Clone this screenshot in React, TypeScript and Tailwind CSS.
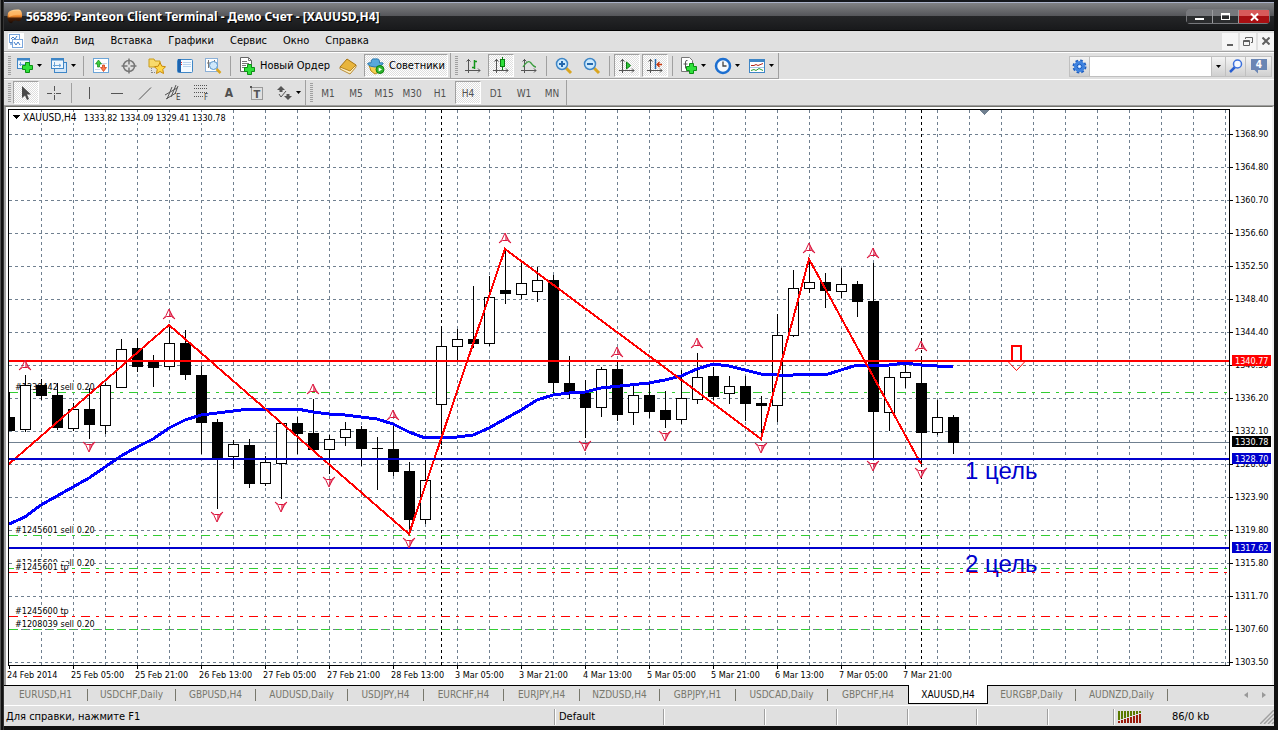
import type { ReactNode } from "react";
import clsx from "clsx";

type Candle = [number, number, number, number, boolean];

const FIRST_X = 9;
const BAR_STEP = 16;

// [high, body top, body bottom, low, is bearish] in chart pixels
const candles: Candle[] = [
    [392, 417, 430, 430, true],
    [375, 385, 429, 431, false],
    [379, 385, 395, 399, true],
    [383, 395, 427, 429, true],
    [403, 409, 428, 430, false],
    [388, 409, 424, 438, true],
    [383, 385, 425, 433, false],
    [339, 349, 387, 387, false],
    [338, 348, 366, 371, true],
    [355, 361, 367, 386, true],
    [325, 343, 366, 369, false],
    [330, 343, 374, 379, true],
    [366, 375, 422, 453, true],
    [419, 422, 458, 508, true],
    [440, 444, 456, 468, false],
    [439, 445, 483, 487, true],
    [456, 462, 483, 485, false],
    [423, 423, 463, 498, false],
    [417, 423, 433, 453, true],
    [399, 433, 449, 449, true],
    [435, 439, 449, 473, false],
    [422, 429, 437, 445, false],
    [426, 429, 448, 465, true],
    [437, 448, 448, 489, true],
    [425, 449, 471, 475, true],
    [462, 471, 519, 533, true],
    [460, 480, 519, 523, false],
    [329, 346, 404, 444, false],
    [329, 339, 346, 360, false],
    [286, 339, 343, 347, true],
    [276, 297, 343, 345, false],
    [250, 290, 293, 303, true],
    [262, 283, 294, 298, false],
    [267, 280, 291, 301, false],
    [275, 280, 382, 392, true],
    [356, 383, 392, 398, true],
    [380, 393, 407, 437, true],
    [367, 369, 407, 416, false],
    [362, 369, 414, 420, true],
    [384, 395, 412, 424, false],
    [381, 395, 411, 417, true],
    [391, 410, 419, 427, true],
    [370, 398, 419, 423, false],
    [353, 377, 399, 403, false],
    [367, 376, 396, 399, true],
    [376, 386, 393, 403, false],
    [376, 386, 403, 420, true],
    [396, 403, 405, 438, true],
    [314, 335, 405, 421, false],
    [270, 288, 335, 336, false],
    [260, 282, 288, 292, false],
    [273, 282, 290, 307, true],
    [268, 284, 291, 297, false],
    [281, 284, 301, 316, true],
    [263, 301, 411, 457, true],
    [367, 377, 412, 430, false],
    [364, 372, 377, 387, false],
    [356, 383, 432, 463, true],
    [400, 417, 432, 434, false],
    [415, 417, 442, 453, true],
];

const zigzag = "9,464 169,325 409,534 505,249 761,439 809,259 921,464";

const movingAverage =
    "9,524 25,517 41,505 89,478 121,456 137,447 153,439 169,428 185,420 201,415 217,413 249,409 297,409 " +
    "313,412 329,414 345,415 361,417 377,419 393,424 409,432 425,438 441,437 457,437 473,435 489,428 505,419 " +
    "521,410 537,400 553,395 569,393 585,392 601,388 649,383 665,380 681,376 697,369 713,364 729,366 745,370 " +
    "761,374 777,375 793,375 809,374 825,375 841,370 857,365 873,366 889,365 905,363 921,365 937,366 953,367";

const fractalsUp = [[25, 365], [169, 314], [313, 389], [393, 415], [505, 238], [617, 352], [697, 343], [809, 248], [873, 253], [921, 346]];
const fractalsDown = [[89, 447], [217, 517], [281, 507], [329, 482], [409, 543], [585, 446], [665, 436], [761, 448], [873, 466], [921, 473]];

const priceLabels = [
    "1368.90", "1364.80", "1360.70", "1356.60", "1352.50", "1348.40", "1344.40", "1340.30", "1336.20",
    "1332.10", "1328.00", "1323.90", "1319.80", "1315.80", "1311.70", "1307.60", "1303.50",
];

const timeLabels = [
    "24 Feb 2014", "25 Feb 05:00", "25 Feb 21:00", "26 Feb 13:00", "27 Feb 05:00", "27 Feb 21:00", "28 Feb 13:00",
    "3 Mar 05:00", "3 Mar 21:00", "4 Mar 13:00", "5 Mar 05:00", "5 Mar 21:00", "6 Mar 13:00", "7 Mar 05:00", "7 Mar 21:00",
];

const priceTags = [
    { y: 355, price: "1340.77", color: "#ff0000" },
    { y: 453, price: "1328.70", color: "#0000cd" },
    { y: 436, price: "1330.78", color: "#000000" },
    { y: 542, price: "1317.62", color: "#0000cd" },
];

const orderLines = [
    { y: 392, color: "#32cd32" },
    { y: 535, color: "#32cd32" },
    { y: 568, color: "#32cd32" },
    { y: 572, color: "#ff0000" },
    { y: 616, color: "#ff0000" },
    { y: 629, color: "#32cd32" },
];

const orderLabels = [
    { y: 390, text: "#1239442 sell 0.20", width: 80 },
    { y: 533, text: "#1245601 sell 0.20", width: 80 },
    { y: 566, text: "#1245600 sell 0.20", width: 80 },
    { y: 570, text: "#1245601 tp", width: 54 },
    { y: 614, text: "#1245600 tp", width: 54 },
    { y: 627, text: "#1208039 sell 0.20", width: 80 },
];

const menu = ["Файл", "Вид", "Вставка", "Графики", "Сервис", "Окно", "Справка"];

const timeframes = ["M1", "M5", "M15", "M30", "H1", "H4", "D1", "W1", "MN"];

const tabs = [
    { name: "EURUSD,H1", width: "w-[84px]" },
    { name: "USDCHF,Daily", width: "w-[88px]" },
    { name: "GBPUSD,H4", width: "w-[80px]" },
    { name: "AUDUSD,Daily", width: "w-[92px]" },
    { name: "USDJPY,H4", width: "w-[76px]" },
    { name: "EURCHF,H4", width: "w-[80px]" },
    { name: "EURJPY,H4", width: "w-[76px]" },
    { name: "NZDUSD,H4", width: "w-[80px]" },
    { name: "GBPJPY,H1", width: "w-[76px]" },
    { name: "USDCAD,Daily", width: "w-[92px]" },
    { name: "GBPCHF,H4", width: "w-[80px]" },
    { name: "XAUUSD,H4", width: "w-[80px]" },
    { name: "EURGBP,Daily", width: "w-[88px]" },
    { name: "AUDNZD,Daily", width: "w-[92px]" },
];

const Icon = ({ children }: { children: ReactNode }) => (
    <svg width="18" height="18" viewBox="0 0 18 18" fill="none" className="shrink-0">
        {children}
    </svg>
);

const GreenPlus = ({ x, y }: { x: number; y: number }) => (
    <path
        transform={`translate(${x} ${y})`}
        d="M3.5.5h4v3h3v4h-3v3h-4v-3h-3v-4h3z"
        fill="#2fe03a"
        stroke="#0b8f14"
    />
);

const Axes = () => (
    <path d="M4.500 2v14M1 13.500h15M2.500 4.500l2-2 2 2M14 11.500l2 2-2 2" stroke="#555" />
);

const Caret = () => (
    <svg width="5" height="3" viewBox="0 0 5 3" className="shrink-0">
        <path d="M0 0h5L2.500 3z" fill="#000" />
    </svg>
);

const Grip = () => (
    <div className="mr-px ml-1 h-[19px] w-[3px] bg-[repeating-linear-gradient(#a0a0a0_0_1px,#e0e0e0_1px_2px)]" />
);

const Separator = () => <div className="mx-[3px] h-5 w-px bg-[#a0a0a0]" />;

const ToolButton = ({ label, pressed, menu, children }: {
    label: string;
    pressed?: boolean;
    menu?: boolean;
    children: ReactNode;
}) => (
    <button
        aria-label={label}
        aria-pressed={pressed}
        className={clsx(
            "flex h-[23px] items-center justify-center text-[10px] text-[#505050]",
            menu ? "w-[34px] gap-[3px]" : "w-[26px] mx-px",
            pressed &&
                "border border-t-[#a0a0a0] border-l-[#a0a0a0] border-r-white border-b-white bg-[repeating-conic-gradient(#ffffff_0_25%,#dedede_0_50%)] bg-[length:2px_2px]"
        )}
    >
        {children}
        {menu && <Caret />}
    </button>
);

const TitleBar = () => (
    <header className="flex h-[31px] items-center border-b border-black bg-[linear-gradient(#15171c_0_2px,#aab2c8_2px_3px,#808184_3px,#55565a_16px,#252628_16px,#18191b_30px)] pt-[3px] pr-1 pl-[3px]">
        <svg width="16" height="17" viewBox="0 0 16 17" className="mr-[3px]">
            <defs>
                <linearGradient id="logo" x1="0" y1="0" x2="0" y2="1">
                    <stop offset="0" stopColor="#ffd9a0" />
                    <stop offset=".5" stopColor="#f28a2c" />
                    <stop offset=".65" stopColor="#4a2008" />
                    <stop offset="1" stopColor="#1a0c05" />
                </linearGradient>
            </defs>
            <path d="M1 5Q3 1 12 1.500Q15.500 2 15 9Q14 15 9 12.500Q6 12 5 15Q1 16 .5 9z" fill="url(#logo)" />
            <path d="M3 4Q8 2 13.500 3v4Q8 6 2 9z" fill="#ffb968" opacity=".8" />
        </svg>
        <h1 className="grow truncate font-['Noto_Sans',sans-serif] text-[12px] font-bold text-white [text-shadow:1px_1px_0_#000]">
            565896: Panteon Client Terminal - Демо Счет - [XAUUSD,H4]
        </h1>
        <div className="flex gap-px rounded-sm border border-[#77787c] bg-[#9a9b9e]">
            <button aria-label="Свернуть" className="flex h-[13px] w-[25px] items-end justify-center bg-[linear-gradient(#77787c_50%,#2b2c2e_50%)] pb-[3px]">
                <span className="h-[2px] w-[9px] bg-white" />
            </button>
            <button aria-label="Развернуть" className="flex h-[13px] w-[25px] items-center justify-center bg-[linear-gradient(#77787c_50%,#2b2c2e_50%)]">
                <span className="h-[7px] w-[9px] border border-t-2 border-white" />
            </button>
            <button aria-label="Закрыть" className="flex h-[13px] w-[30px] items-center justify-center bg-[linear-gradient(#d85a5a_50%,#a80f12_50%)]">
                <svg width="9" height="8" viewBox="0 0 9 8">
                    <path d="M1 .5l7 7M8 .5l-7 7" stroke="#fff" strokeWidth="2" />
                </svg>
            </button>
        </div>
    </header>
);

const MenuBar = () => (
    <nav className="flex h-[21px] items-center border-b border-[#a0a0a0] pl-1">
        <svg width="16" height="16" viewBox="0 0 16 16" className="mr-[-1px] bg-white" fill="none">
            <rect x="1.500" y="1.500" width="10" height="8" stroke="#7aa6dc" />
            <path d="M3 6l2-2 2 2 2-3M3 12V9" stroke="#3f7bc8" />
            <rect x="4.500" y="6.500" width="10" height="8" fill="#fff" stroke="#7aa6dc" />
            <path d="M6 9l2 3 2-3 2 3" stroke="#3f7bc8" />
        </svg>
        {menu.map((item) => (
            <button key={item} className="px-2 pt-px text-[11px] text-black">
                {item}
            </button>
        ))}
        <div className="ml-auto flex gap-[2px]">
            <button aria-label="Свернуть окно" className="flex h-[17px] w-4 items-end justify-center bg-[#f6f6f6] pb-1">
                <span className="h-[2px] w-[6px] bg-[#606060]" />
            </button>
            <button aria-label="Восстановить окно" className="flex h-[17px] w-4 items-center justify-center bg-[#f6f6f6]">
                <svg width="10" height="9" viewBox="0 0 10 9" fill="none" stroke="#606060">
                    <path d="M2.500 2V.5h7v5H8M.5 3.500h6v5h-6zM.5 4.500h6" />
                </svg>
            </button>
            <button aria-label="Закрыть окно" className="flex h-[17px] w-4 items-center justify-center bg-[#f6f6f6]">
                <svg width="8" height="8" viewBox="0 0 8 8" stroke="#606060" strokeWidth="2">
                    <path d="M.5.5l7 7M7.500.5l-7 7" />
                </svg>
            </button>
        </div>
    </nav>
);

const StandardToolbar = () => (
    <div className="flex h-[27px] items-center border-t border-white">
        <div className="flex h-[26px] items-center border-r border-b border-[#a0a0a0]">
            <Grip />
            <ToolButton label="Новый график" menu>
                <Icon>
                    <rect x="1.500" y="1.500" width="12" height="10" fill="#e8f3fd" stroke="#3f86c6" />
                    <path d="M1 2.500h13" stroke="#3f86c6" strokeWidth="2" />
                    <path d="M4.500 5v4M3 7.500h7" stroke="#6ca5d8" />
                    <GreenPlus x={6} y={5} />
                </Icon>
            </ToolButton>
            <ToolButton label="Профили" menu>
                <Icon>
                    <rect x="4.500" y="5.500" width="12" height="10" fill="#d3e6f8" stroke="#3f86c6" />
                    <rect x="1.500" y="1.500" width="12" height="10" fill="#eef6fd" stroke="#3f86c6" />
                    <path d="M1 2.500h13" stroke="#3f86c6" strokeWidth="2" />
                    <path d="M4.500 5v5M3 8.500h8M9 7l2 1.500L9 10" stroke="#6ca5d8" />
                </Icon>
            </ToolButton>
            <Separator />
            <ToolButton label="Обзор рынка">
                <Icon>
                    <rect x="1.500" y="1.500" width="15" height="14" fill="#fff" stroke="#6ca5d8" />
                    <path d="M9 6.500h6M3 12.500h5" stroke="#c8d6e6" />
                    <path d="M5.500 10V7H3.500l3-4 3 4h-2v3z" fill="#3ccf3c" stroke="#15851a" strokeWidth=".7" />
                    <path d="M10.500 8v2.500h-2l3 4 3-4h-2V8z" fill="#ff7a4a" stroke="#c8370c" strokeWidth=".7" />
                </Icon>
            </ToolButton>
            <ToolButton label="Окно данных">
                <Icon>
                    <circle cx="9" cy="9" r="5.500" stroke="#777" strokeWidth="1.500" />
                    <path d="M9 1.500v6M9 10.500v6M1.500 9h6M10.500 9h6" stroke="#777" strokeWidth="1.500" />
                </Icon>
            </ToolButton>
            <ToolButton label="Навигатор">
                <Icon>
                    <path d="M1 2h5l1 2h5v6H1z" fill="#f8da6c" stroke="#c99c1c" />
                    <path d="M3.500 11v5M4 15.500h3" stroke="#888" strokeDasharray="1 1" />
                    <path d="M12 5.500l1.800 3.700 3.700.5-2.700 2.800.7 4-3.500-2-3.500 2 .7-4-2.700-2.800 3.700-.5z" fill="#ffd84a" stroke="#c8890c" />
                </Icon>
            </ToolButton>
            <ToolButton label="Терминал">
                <Icon>
                    <rect x="1.500" y="2.500" width="15" height="13" rx="1" fill="#f4faff" stroke="#3f86c6" />
                    <path d="M3.500 2v13" stroke="#1d63ae" strokeWidth="3" />
                    <path d="M7 5.500h8M7 7.500h8M7 9.500h8" stroke="#b9d3ee" />
                    <path d="M5 5.500h1M5 7.500h1" stroke="#e33" />
                </Icon>
            </ToolButton>
            <ToolButton label="Тестер стратегий">
                <Icon>
                    <rect x="1.500" y="1.500" width="12" height="13" fill="#fff" stroke="#8ab0d8" />
                    <path d="M4.500 3v8M10.500 3v4M3 6h3" stroke="#777" />
                    <circle cx="9.500" cy="8.500" r="4" fill="#cfe8fb" stroke="#5795cc" />
                    <path d="M12.500 12l4 4" stroke="#d9a520" strokeWidth="2.500" />
                </Icon>
            </ToolButton>
            <Separator />
            <button className="flex h-[23px] items-center gap-1 px-1 text-[11px] text-black">
                <Icon>
                    <path d="M2.500.5h8l3 3v11h-11z" fill="#fff" stroke="#666" />
                    <path d="M10.500.5v3h3M4 4.500h5M4 6.500h7M4 8.500h4M4 10.500h3" stroke="#777" />
                    <GreenPlus x={6} y={7} />
                </Icon>
                <span className="pt-px">Новый Ордер</span>
            </button>
            <ToolButton label="MetaEditor">
                <Icon>
                    <path d="M1 10l7-8 9 6-6 8z" fill="#e8b53c" stroke="#a87410" />
                    <path d="M1 10l10 4 6-6v2l-6 7-10-5z" fill="#fff0c0" stroke="#a87410" strokeWidth=".8" />
                </Icon>
            </ToolButton>
            <button
                aria-pressed
                className="mx-[2px] flex h-[23px] items-center gap-1 border border-t-[#a0a0a0] border-l-[#a0a0a0] border-r-white border-b-white bg-[repeating-conic-gradient(#ffffff_0_25%,#dedede_0_50%)] bg-[length:2px_2px] px-[2px] text-[11px] text-black"
            >
                <Icon>
                    <path d="M2 8h12l-2 7-4 2-4-3z" fill="#f5cf50" stroke="#b98b1a" />
                    <path d="M4 6q0-5 4-4 5-1 4.500 4Q17 5 16 7q-3 3-8 3T.5 7Q1 5 4 6z" fill="#56a8dc" stroke="#2e79ad" />
                    <circle cx="13" cy="12.500" r="4" fill="#2fb52f" stroke="#10800f" />
                    <path d="M11.700 10.500l3.300 2-3.300 2z" fill="#fff" />
                </Icon>
                <span className="pt-px">Советники</span>
            </button>
        </div>
        <div className="flex h-[26px] items-center border-r border-b border-[#a0a0a0]">
            <Grip />
            <ToolButton label="Бары">
                <Icon>
                    <Axes />
                    <path d="M10.500 3v9M8 10.500h2M11 4.500h2" stroke="#13951b" strokeWidth="1.500" />
                </Icon>
            </ToolButton>
            <ToolButton label="Японские свечи" pressed>
                <Icon>
                    <Axes />
                    <path d="M10.500 0v13" stroke="#0b7d12" />
                    <rect x="8.500" y="2.500" width="4" height="7" fill="#2fe03a" stroke="#0b7d12" />
                </Icon>
            </ToolButton>
            <ToolButton label="Линия">
                <Icon>
                    <Axes />
                    <path d="M3 10Q8 2 11 6t5 4" stroke="#3a9c3e" strokeWidth="1.300" />
                </Icon>
            </ToolButton>
            <Separator />
            <ToolButton label="Увеличить">
                <Icon>
                    <path d="M11 11l5 5" stroke="#d9a520" strokeWidth="3" />
                    <circle cx="7" cy="7" r="5.500" fill="#cdeafd" stroke="#3f86c6" strokeWidth="1.500" />
                    <path d="M7 4v6M4 7h6" stroke="#2568ad" strokeWidth="2" />
                </Icon>
            </ToolButton>
            <ToolButton label="Уменьшить">
                <Icon>
                    <path d="M11 11l5 5" stroke="#d9a520" strokeWidth="3" />
                    <circle cx="7" cy="7" r="5.500" fill="#cdeafd" stroke="#3f86c6" strokeWidth="1.500" />
                    <path d="M4 7h6" stroke="#2568ad" strokeWidth="2" />
                </Icon>
            </ToolButton>
            <Separator />
            <ToolButton label="Автопрокрутка" pressed>
                <Icon>
                    <Axes />
                    <path d="M8.500 5l4 3.500-4 3.500z" fill="#2fc93a" stroke="#0b7d12" />
                </Icon>
            </ToolButton>
            <ToolButton label="Сдвиг графика" pressed>
                <Icon>
                    <Axes />
                    <path d="M9.500 2v10" stroke="#2568ad" strokeWidth="1.500" />
                    <path d="M16 7.500h-5M13.500 5l-2.500 2.500 2.500 2.500" stroke="#c8370c" strokeWidth="1.300" />
                </Icon>
            </ToolButton>
            <Separator />
            <ToolButton label="Индикаторы" menu>
                <Icon>
                    <path d="M1.500.5h8l3 3v11h-11z" fill="#fff" stroke="#777" />
                    <path d="M7.500 3.500Q5.500 3 5.500 5v6.500M3.500 7h4" stroke="#555" />
                    <GreenPlus x={6} y={6} />
                </Icon>
            </ToolButton>
            <ToolButton label="Периоды" menu>
                <Icon>
                    <circle cx="9" cy="9" r="7" fill="#f4f8fc" stroke="#1d6fd0" strokeWidth="2.500" />
                    <path d="M9 4.500V9h3.500" stroke="#444" strokeWidth="1.300" />
                </Icon>
            </ToolButton>
            <ToolButton label="Шаблоны" menu>
                <Icon>
                    <rect x="1.500" y="2.500" width="15" height="13" fill="#fff" stroke="#3f86c6" />
                    <path d="M1 3.500h16" stroke="#3f86c6" strokeWidth="3" />
                    <path d="M3 8.500h3l2-1 2 1 5-2" stroke="#b3261c" />
                    <path d="M2 10.500h14" stroke="#a8c8e8" />
                    <path d="M3 13.500l3-1 2 1 3-2 2 1 2 1" stroke="#2a9c30" />
                </Icon>
            </ToolButton>
        </div>
        <div className="mr-[2px] ml-auto flex h-[21px] items-stretch gap-px border border-[#c0c0c0] bg-[#c0c0c0]">
            <button aria-label="Настройки поиска" className="flex w-[19px] items-center justify-center bg-[linear-gradient(#f4f4f4,#d0d0d0)]">
                <svg width="15" height="15" viewBox="0 0 15 15">
                    <circle cx="7.500" cy="7.500" r="6" fill="none" stroke="#1f5fc0" strokeWidth="2" strokeDasharray="2.700 2" />
                    <circle cx="7.500" cy="7.500" r="5.500" fill="#3f83e0" />
                    <circle cx="7.500" cy="7.500" r="2.300" fill="#8fc0ff" stroke="#1f5fc0" />
                    <circle cx="7.500" cy="7.500" r="1" fill="#fff" />
                </svg>
            </button>
            <input aria-label="Поиск" className="w-[121px] bg-white px-1 text-[11px] outline-none" />
            <button aria-label="История поиска" className="flex w-[13px] items-center justify-center bg-[linear-gradient(#f4f4f4,#d0d0d0)]">
                <Caret />
            </button>
            <button aria-label="Найти" className="flex w-[19px] items-center justify-center bg-[linear-gradient(#f4f4f4,#d0d0d0)]">
                <svg width="14" height="14" viewBox="0 0 14 14" fill="none">
                    <path d="M6 8l-5 5" stroke="#2a5fd0" strokeWidth="2.500" />
                    <circle cx="8.500" cy="5" r="4" fill="#f4f8ff" stroke="#3a6fdc" strokeWidth="1.500" />
                </svg>
            </button>
            <button aria-label="Сообщения" className="flex w-[25px] items-center justify-center bg-[linear-gradient(#f4f4f4,#d0d0d0)]">
                <svg width="16" height="16" viewBox="0 0 16 16">
                    <path d="M0 1h16v11H7v3.500L3.500 12H0z" fill="#6a86b4" />
                    <text x="8" y="10" textAnchor="middle" fill="#fff" className="text-[10px] font-bold">4</text>
                </svg>
            </button>
        </div>
    </div>
);

const LineToolbar = () => (
    <div className="flex h-[27px] items-center border-t border-b border-t-white border-b-[#a0a0a0]">
        <div className="flex h-[25px] items-center border-r border-[#a0a0a0]">
            <Grip />
            <ToolButton label="Курсор" pressed>
                <Icon>
                    <path d="M5 2v12l3-2.500 2 4.500 2-1-2-4.500h4z" fill="#4a4a4a" />
                </Icon>
            </ToolButton>
            <ToolButton label="Перекрестие">
                <Icon>
                    <path d="M9.500 2v5M9.500 11v5M2 9.500h5M11 9.500h5M9 9.500h1" stroke="#555" />
                </Icon>
            </ToolButton>
            <Separator />
            <ToolButton label="Вертикальная линия">
                <Icon><path d="M9.500 3v12" stroke="#555" /></Icon>
            </ToolButton>
            <ToolButton label="Горизонтальная линия">
                <Icon><path d="M3 9.500h12" stroke="#555" /></Icon>
            </ToolButton>
            <ToolButton label="Трендовая линия">
                <Icon><path d="M3 15.500L15 3.500" stroke="#555" /></Icon>
            </ToolButton>
            <ToolButton label="Равноудаленный канал">
                <Icon>
                    <path d="M1 11l12-7M2 15l10-6M3 15l5-12M7 13l5-12M11 10l3-8" stroke="#555" />
                    <text x="12" y="16" fill="#444" className="text-[8px]">E</text>
                </Icon>
            </ToolButton>
            <ToolButton label="Линии Фибоначчи">
                <Icon>
                    <path d="M2 1.500h14M2 4.500h14M2 8.500h14M2 12.500h9" stroke="#555" strokeDasharray="1 1" />
                    <text x="12" y="16" fill="#444" className="text-[8px]">F</text>
                </Icon>
            </ToolButton>
            <ToolButton label="Текст">
                <span className="text-[12px] font-bold">A</span>
            </ToolButton>
            <ToolButton label="Текстовая метка">
                <Icon>
                    <rect x="3.500" y="3.500" width="11" height="12" stroke="#555" strokeDasharray="1 1" />
                    <path d="M2 2h2v2H2z" fill="#555" />
                    <text x="9" y="14" textAnchor="middle" fill="#555" className="text-[11px] font-bold">T</text>
                </Icon>
            </ToolButton>
            <ToolButton label="Стрелки" menu>
                <Icon>
                    <path d="M6 2l4 4H7.500v2h-3V6H2zM13 16l-4-4h2.500v-2h3v2H17z" fill="#555" />
                    <path d="M4 10l2 3 5-6" stroke="#555" />
                </Icon>
            </ToolButton>
        </div>
        <div className="flex h-[25px] items-center border-r border-[#a0a0a0]">
            <Grip />
            {timeframes.map((tf) => (
                <ToolButton key={tf} label={tf} pressed={tf === "H4"}>
                    <span className="pt-px">{tf}</span>
                </ToolButton>
            ))}
        </div>
    </div>
);

const Fractal = ({ x, y, down }: { x: number; y: number; down?: boolean }) => (
    <g transform={`translate(${x} ${y}) scale(1 ${down ? -1 : 1})`}>
        <path d="M0-5L-3 1.500L-6 5L-2.500 2.500H2.500L6 5L3 1.500z" />
        <path d="M0-5L6 5L2.500 2.500H0z" fill="#dc143c" fillOpacity=".6" stroke="none" />
    </g>
);

const Chart = () => (
    <svg viewBox="6 107 1266 578" className="block w-full bg-white" shapeRendering="crispEdges" fill="none">
        {/* Grid */}
        {priceLabels.map((_, i) => (
            <path key={`h${i}`} d={`M9 ${134.5 + i * 33}H1229`} stroke="#708090" strokeDasharray="3 3" />
        ))}
        {[...Array(38)].map((_, i) => (
            <path key={`v${i}`} d={`M${41.5 + i * 32} 110V665`} stroke="#708090" strokeDasharray="3 3" />
        ))}
        {[441, 921].map((x) => (
            <path key={x} d={`M${x + 0.5} 110V665`} stroke="#000" strokeDasharray="3 3" />
        ))}

        {/* Open orders and take profits */}
        {orderLines.map((line) => (
            <path key={line.y} d={`M9 ${line.y + 0.5}H1229`} stroke={line.color} strokeDasharray="9 6 3 6" />
        ))}
        {orderLabels.map((label) => (
            <g key={label.y}>
                <rect x="14" y={label.y - 8} width={label.width} height="10" fill="#fff" />
                <text x="15" y={label.y} fill="#000" className="text-[9px]">{label.text}</text>
            </g>
        ))}
        <path d="M9 442.500H1229" stroke="#708090" />

        {/* Candles */}
        {candles.map(([high, top, bottom, low, bearish], i) => {
            const x = FIRST_X + i * BAR_STEP;
            const left = i === 0 ? x : x - 5;
            return (
                <g key={x}>
                    <path d={`M${x + 0.5} ${high}V${low + 1}`} stroke="#000" />
                    {bearish ? (
                        <rect x={left} y={top} width={x + 6 - left} height={bottom - top + 1} fill="#000" />
                    ) : (
                        <rect x={left + 0.5} y={top + 0.5} width="10" height={bottom - top} fill="#fff" stroke="#000" />
                    )}
                </g>
            );
        })}

        {/* Indicators */}
        <polyline points={movingAverage} stroke="#0000ff" strokeWidth="3" strokeLinejoin="round" />
        <polyline points={zigzag} stroke="#ff0000" strokeWidth="2" />
        <path d="M9 361H1229" stroke="#ff0000" strokeWidth="2" />
        <path d="M9 459H1229M9 548H1229" stroke="#0000cd" strokeWidth="2" />
        <g shapeRendering="auto" stroke="#dc143c">
            {fractalsUp.map(([x, y]) => (
                <Fractal key={x} x={x} y={y} />
            ))}
            {fractalsDown.map(([x, y]) => (
                <Fractal key={x} x={x} y={y} down />
            ))}
        </g>

        {/* Targets */}
        <path d="M1012 361V346H1021V361" stroke="#ff0000" strokeWidth="2" />
        <path d="M1008 361.500L1016.500 370.500L1025 361.500" stroke="#ff0000" shapeRendering="auto" />
        <text x="965" y="479" fill="#0000cd" className="font-['Liberation_Sans',sans-serif] text-[24px]">1 цель</text>
        <text x="965" y="572" fill="#0000cd" className="font-['Liberation_Sans',sans-serif] text-[24px]">2 цель</text>

        {/* Frame, header and axes */}
        <path d="M8.500 665.500V109.500H1229.500V665.500z" stroke="#000" />
        <path d="M979 110H989L984 115z" fill="#708090" />
        <path d="M12 115H20L16 119z" fill="#000" />
        <rect x="22" y="112" width="204" height="11" fill="#fff" />
        <text x="23" y="121" fill="#000" className="text-[10px]">XAUUSD,H4</text>
        <text x="84" y="121" fill="#000" className="text-[9px]">1333.82 1334.09 1329.41 1330.78</text>
        {priceLabels.map((price, i) => (
            <g key={price}>
                <path d={`M1230 ${134.5 + i * 33}H1233`} stroke="#000" />
                <text x="1235" y={137 + i * 33} fill="#000" className="text-[9px]">{price}</text>
            </g>
        ))}
        {priceTags.map((tag) => (
            <g key={tag.price}>
                <rect x="1232" y={tag.y} width="39" height="11" fill={tag.color} />
                <text x="1235" y={tag.y + 9} fill="#fff" className="text-[9px]">{tag.price}</text>
            </g>
        ))}
        {timeLabels.map((time, i) => (
            <g key={time}>
                <path d={`M${9.5 + i * 64} 666V669`} stroke="#000" />
                <text x={7 + i * 64} y="678" fill="#000" className="text-[9px]">{time}</text>
            </g>
        ))}
    </svg>
);

const ChartTabs = () => (
    <div className="flex h-[21px] items-start border-t border-b border-t-black border-b-white">
        {tabs.map((tab, i) => {
            const active = tab.name === "XAUUSD,H4";
            const divided = !active && tabs[i + 1]?.name !== "XAUUSD,H4";
            return (
                <button
                    key={tab.name}
                    className={clsx(
                        "flex items-center justify-center whitespace-nowrap text-[10px]",
                        tab.width,
                        active ? "-mt-px h-[19px] border border-t-0 border-black bg-white text-black" : "h-[17px] text-[#77776c]"
                    )}
                >
                    <span className="grow">{tab.name}</span>
                    {divided && <span className="h-3 w-px bg-[#77776c]" />}
                </button>
            );
        })}
        <div className="mr-2 ml-auto flex h-[18px] items-center gap-[14px]">
            <button aria-label="Назад">
                <svg width="4" height="6" viewBox="0 0 4 6" className="block"><path d="M4 0v6L0 3z" fill="#999" /></svg>
            </button>
            <button aria-label="Вперед">
                <svg width="4" height="6" viewBox="0 0 4 6" className="block"><path d="M0 0v6l4-3z" fill="#999" /></svg>
            </button>
        </div>
    </div>
);

const cellBorder = "flex h-4 items-center border-l border-[#a0a0a0] shadow-[inset_1px_0_0_#fff]";

const StatusBar = () => (
    <footer className="flex h-5 items-center pt-[2px] text-[11px] text-black">
        <span className="grow pl-[2px]">Для справки, нажмите F1</span>
        <span className={clsx(cellBorder, "w-[109px] pl-1")}>Default</span>
        <span className={clsx(cellBorder, "w-[101px]")} />
        <span className={clsx(cellBorder, "w-[72px]")} />
        <span className={clsx(cellBorder, "w-[71px]")} />
        <span className={clsx(cellBorder, "w-[69px]")} />
        <span className={clsx(cellBorder, "w-[71px]")} />
        <span className={clsx(cellBorder, "w-[66px]")} />
        <span className={clsx(cellBorder, "w-[161px] gap-[30px] pl-1")}>
            <svg width="24" height="12" viewBox="0 0 24 12" shapeRendering="crispEdges">
                {[...Array(8)].map((_, i) => (
                    <g key={i}>
                        <rect x={i * 3} y="0" width="2" height={9 - i} fill="#5a7a00" />
                        <rect x={i * 3} y={10 - i} width="2" height={2 + i} fill="#9c1c0c" />
                    </g>
                ))}
            </svg>
            86/0 kb
            <svg width="14" height="14" viewBox="0 0 14 14" className="ml-auto" stroke="#a0a0a0" strokeWidth="1.500">
                <path d="M0 14L14 0M4 14L14 4M8 14L14 8M12 14l2-2" />
            </svg>
        </span>
    </footer>
);

export default function App() {
    return (
        <div className="min-h-screen bg-[linear-gradient(90deg,#555_0_1px,#111_1px_3px,#333_3px_4px,#111_4px)] px-1 pb-1 font-['DejaVu_Sans_Condensed','DejaVu_Sans',sans-serif] [font-stretch:condensed]">
            <TitleBar />
            <main className="bg-[#e0e0e0]">
                <MenuBar />
                <StandardToolbar />
                <LineToolbar />
                <div className="border-t border-r-2 border-l-2 border-t-[#70706a] border-r-[#f0f0f0] border-l-[#a0a0a0]">
                    <Chart />
                </div>
                <ChartTabs />
                <StatusBar />
            </main>
        </div>
    );
}
